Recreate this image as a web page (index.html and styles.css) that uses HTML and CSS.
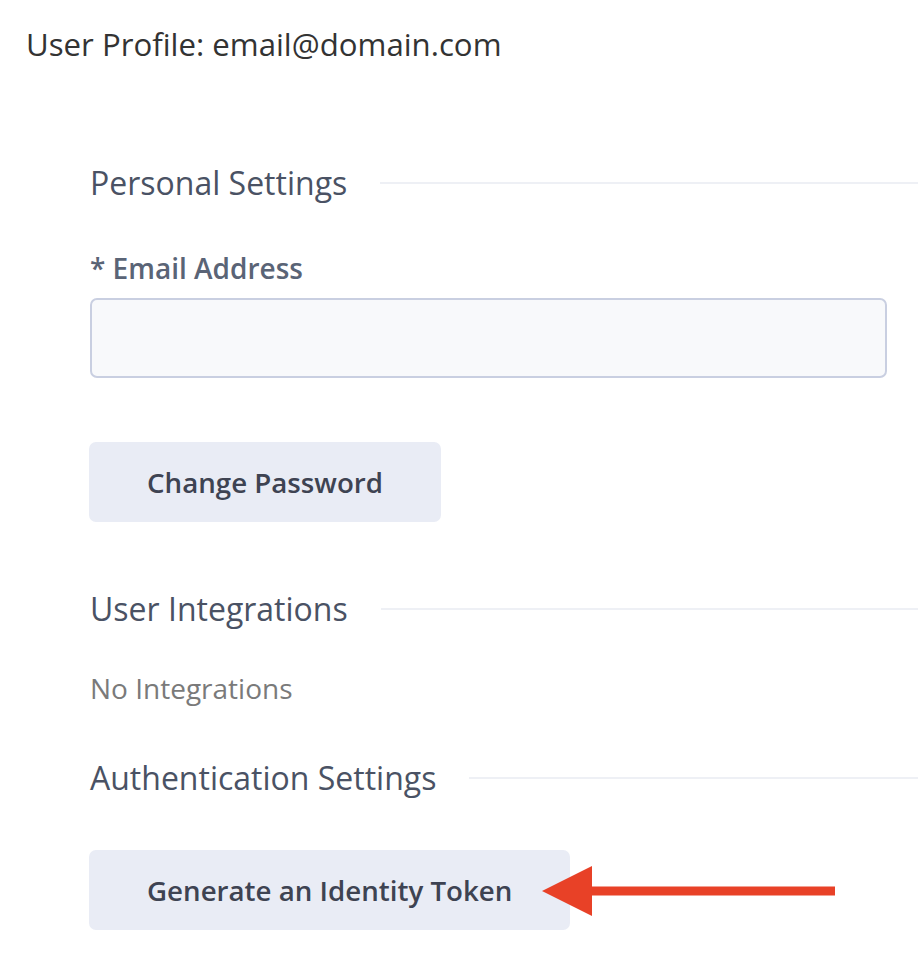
FILE: index.html
```html
<!DOCTYPE html>
<html>
<head>
<meta charset="utf-8">
<link rel="stylesheet" href="styles.css">
</head>
<body>
<h1 class="page-title">User Profile: email@domain.com</h1>
<main class="content">
  <div class="section-head"><h2>Personal Settings</h2><span class="rule"></span></div>
  <label class="field-label" for="email">* Email Address</label>
  <input class="text-input" id="email" type="text">
  <button class="btn btn-password">Change Password</button>

  <div class="section-head integrations"><h2>User Integrations</h2><span class="rule"></span></div>
  <p class="empty">No Integrations</p>

  <div class="section-head auth"><h2>Authentication Settings</h2><span class="rule"></span></div>
  <div class="token-row">
    <button class="btn">Generate an Identity Token</button>
    <svg class="arrow" width="294" height="52" viewBox="0 0 294 52">
      <polygon points="0,25 50,0 50,50" fill="#e84127"/>
      <rect x="49" y="20.5" width="244" height="9" fill="#e84127"/>
    </svg>
  </div>
</main>
</body>
</html>
```
FILE: styles.css
```css
* { box-sizing: border-box; }
html, body { margin: 0; padding: 0; background: #fff; }
body {
  font-family: "Open Sans", "Noto Sans", sans-serif;
  width: 918px;
  overflow: hidden;
}
.page-title {
  margin: 0;
  padding: 24px 0 0 26px;
  font-size: 31.2px;
  line-height: 40px;
  font-weight: 400;
  color: #333333;
}
.content {
  padding-left: 90px;
  padding-top: 99px;
  display: flex;
  flex-direction: column;
  align-items: flex-start;
}
.section-head {
  width: 100%;
  display: flex;
  align-items: center;
  gap: 33px;
}
.section-head h2 {
  margin: 0;
  font-size: 32px;
  line-height: 40px;
  font-weight: 400;
  color: #4a5264;
  white-space: nowrap;
}
.rule {
  flex: 1;
  height: 2px;
  background: #eef0f5;
}
.field-label {
  margin-top: 48px;
  font-size: 28px;
  line-height: 34px;
  font-weight: 600;
  color: #5a6476;
}
.text-input {
  margin-top: 13px;
  width: 797px;
  height: 80px;
  border: 2px solid #c9cfe1;
  border-radius: 7px;
  background: #f8f9fb;
}
.btn {
  font-family: inherit;
  font-size: 27.7px;
  font-weight: 600;
  color: #3e4352;
  background: #e9ecf5;
  border: none;
  border-radius: 7px;
  height: 80px;
  padding: 0 58px;
  line-height: 36px;
  margin-left: -1px;
}
.btn-password { margin-top: 64px; }
.integrations { margin-top: 67px; }
.empty {
  margin: 42px 0 0;
  font-size: 28px;
  line-height: 34px;
  color: #7a7a7a;
}
.auth { margin-top: 53px; }
.token-row {
  margin-top: 52px;
  position: relative;
}
.arrow {
  position: absolute;
  left: 452px;
  top: 16px;
}
```
